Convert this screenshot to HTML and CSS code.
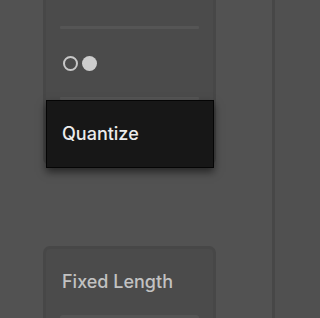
FILE: index.html
```html
<!DOCTYPE html>
<html>
<head>
<meta charset="utf-8">
<link rel="stylesheet" href="styles.css">
</head>
<body>
<div class="app">
  <div class="col">
    <div class="card card-top">
      <div class="sep sep-first"></div>
      <div class="dots">
        <span class="dot dot-off"></span>
        <span class="dot dot-on"></span>
      </div>
      <div class="sep sep-second"></div>
    </div>
    <div class="card card-bottom">
      <div class="card-title">Fixed Length</div>
      <div class="field"></div>
    </div>
    <div class="tooltip">Quantize</div>
  </div>
  <div class="divider"></div>
  <div class="right"></div>
</div>
</body>
</html>
```

FILE: styles.css
```css
html, body {
  margin: 0;
  padding: 0;
  background: #525252;
  font-family: Inter, "Noto Sans", sans-serif;
}
.app {
  display: flex;
  height: 318px;
  overflow: hidden;
}
.col {
  position: relative;
  width: 272px;
  padding-left: 43px;
  box-sizing: border-box;
  display: flex;
  flex-direction: column;
}
.card {
  width: 173px;
  box-sizing: border-box;
  background: #4b4b4b;
  border: 3px solid #474747;
  border-radius: 7px;
  padding: 0 14px;
}
.card-top {
  margin-top: -10px;
  height: 175px;
  border-top: none;
  flex: none;
}
.sep {
  height: 3px;
  background: #555555;
  border-radius: 1px;
}
.sep-first {
  margin-top: 36px;
}
.dots {
  display: flex;
  gap: 4px;
  margin-top: 27px;
  padding-left: 3px;
}
.dot {
  width: 15px;
  height: 15px;
  border-radius: 50%;
  box-sizing: border-box;
}
.dot-off {
  border: 2px solid #c8c8c8;
}
.dot-on {
  background: #cdcdcd;
}
.sep-second {
  margin-top: 26px;
}
.card-bottom {
  margin-top: 81px;
  flex: none;
  height: 100px;
}
.card-title {
  padding-top: 22px;
  font-size: 18px;
  font-weight: 500;
  line-height: 22px;
  color: #c2c2c2;
  padding-left: 2px;
}
.field {
  margin-top: 22px;
  height: 20px;
  background: #545454;
  border-radius: 3px;
}
.tooltip {
  position: absolute;
  left: 46px;
  top: 100px;
  width: 168px;
  height: 68px;
  box-sizing: border-box;
  background: #171717;
  border: 1px solid #050505;
  box-shadow: 0 4px 8px rgba(0,0,0,0.55);
  display: flex;
  align-items: center;
  padding-left: 15px;
  font-size: 18px;
  font-weight: 500;
  line-height: 22px;
  color: #ececec;
}
.divider {
  width: 3px;
  background: #474747;
  flex: none;
}
.right {
  flex: 1;
  background: #505050;
}
```
